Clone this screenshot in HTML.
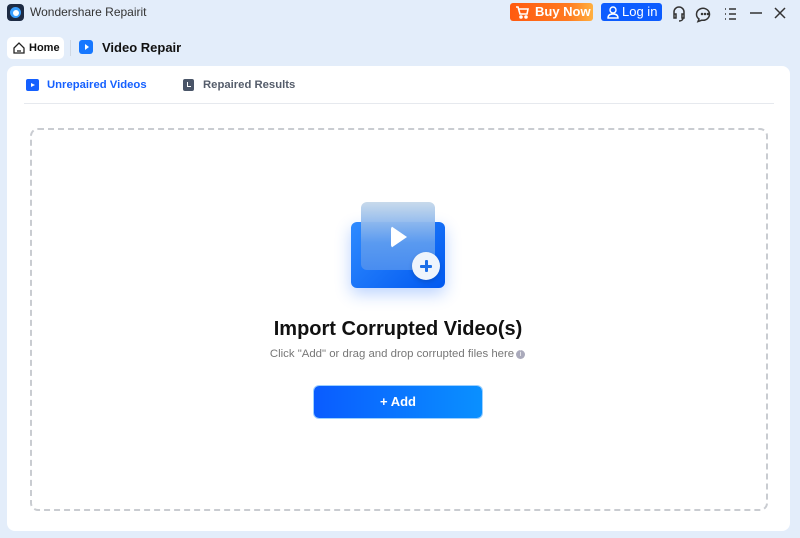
<!DOCTYPE html>
<html><head><meta charset="utf-8"><style>
*{margin:0;padding:0;box-sizing:border-box}
body{width:800px;height:538px;background:#e3edfa;font-family:"Liberation Sans",sans-serif;position:relative;overflow:hidden}
.abs{position:absolute}
.card{left:7px;top:66px;width:783px;height:465px;background:#fff;border-radius:8px}
.dash{left:30px;top:128px;width:738px;height:383px;border:2px dashed #c9ccd1;border-radius:8px}
</style></head><body>
<div class="abs" style="left:7px;top:4px;width:17px;height:17px;background:#1d2b44;border-radius:4px"></div>
<div class="abs" style="left:10px;top:7px;width:11px;height:11px;border-radius:50%;background:#3aa0ff"></div>
<div class="abs" style="left:13px;top:10px;width:6px;height:6px;border-radius:50%;background:#fff"></div>
<div class="abs" style="left:30px;top:5px;font-size:12px;color:#333">Wondershare Repairit</div>

<div class="abs" style="left:510px;top:3px;width:83px;height:18px;border-radius:3px;background:linear-gradient(90deg,#ff5a10,#ff7a20 70%,#ffb040);color:#fff;font-weight:bold;font-size:13px;line-height:18px;padding-left:25px">Buy Now</div>
<svg class="abs" style="left:515px;top:5px" width="15" height="14" fill="none" stroke="#fff" stroke-width="1.6"><path d="M1 2h2l2 7h7l1-5H4"/><circle cx="6" cy="12" r="1" fill="#fff"/><circle cx="11" cy="12" r="1" fill="#fff"/></svg>
<div class="abs" style="left:601px;top:3px;width:61px;height:18px;border-radius:3px;background:#0c5cff;color:#fff;font-size:13px;line-height:18px;padding-left:21px">Log in</div>
<svg class="abs" style="left:607px;top:5px" width="12" height="14"><circle cx="6" cy="5" r="3" fill="none" stroke="#fff" stroke-width="1.4"/><path d="M1 13c0-3 2-4 5-4s5 1 5 4z" fill="none" stroke="#fff" stroke-width="1.4"/></svg>
<svg class="abs" style="left:670px;top:3px" width="130" height="20" fill="none" stroke="#333" stroke-width="1.5"><path d="M4 12V9a5 5 0 0 1 10 0v3M4 11h2v4H4zM12 11h2v4h-2zM13 15c0 2-2 3-4 3"/><path d="M29 16a6.5 6 0 1 1 3 1.2l-4 1.3z"/><circle cx="32" cy="11" r=".5" fill="#333"/><circle cx="35" cy="11" r=".5" fill="#333"/><circle cx="38" cy="11" r=".5" fill="#333"/><path d="M55 6h1M59 6h7M55 11h1M59 11h7M55 16h1M59 16h7M80 10h12M105 5l10 10M115 5l-10 10"/></svg>

<div class="abs" style="left:7px;top:37px;width:57px;height:22px;background:#fff;border-radius:5px;font-size:11px;font-weight:bold;line-height:22px;padding-left:22px;color:#111">Home</div>
<svg class="abs" style="left:13px;top:42px" width="12" height="12" fill="none" stroke="#222" stroke-width="1.3"><path d="M1 6L6 1l5 5v5H1z"/><path d="M4 9h4"/></svg>
<div class="abs" style="left:70px;top:40px;width:1px;height:16px;background:#cfd8e4"></div>
<div class="abs" style="left:79px;top:40px;width:14px;height:14px;background:#1677ff;border-radius:3px"></div>
<div class="abs" style="left:85px;top:44px;border-left:4px solid #fff;border-top:3px solid transparent;border-bottom:3px solid transparent"></div>
<div class="abs" style="left:102px;top:40px;font-size:13px;font-weight:bold;color:#111">Video Repair</div>

<div class="abs card"></div>
<div class="abs" style="left:26px;top:79px;width:13px;height:12px;background:#1560ff;border-radius:2px"></div>
<div class="abs" style="left:31px;top:83px;border-left:4px solid #fff;border-top:2.5px solid transparent;border-bottom:2.5px solid transparent"></div>
<div class="abs" style="left:47px;top:79px;font-size:11.3px;font-weight:bold;color:#1560ff">Unrepaired Videos</div>
<div class="abs" style="left:183px;top:79px;width:11px;height:12px;background:#4a5568;border-radius:2px"></div>
<div class="abs" style="left:187px;top:82px;width:4px;height:5px;border-left:1.5px solid #fff;border-bottom:1.5px solid #fff"></div>
<div class="abs" style="left:203px;top:79px;font-size:11.3px;font-weight:bold;color:#555d6b">Repaired Results</div>
<div class="abs" style="left:24px;top:103px;width:750px;height:1px;background:#e6e9ee"></div>

<div class="abs dash"></div>
<div class="abs" style="left:351px;top:222px;width:94px;height:66px;border-radius:6px;background:linear-gradient(135deg,#2f8bff,#0058f0);box-shadow:0 6px 16px rgba(30,110,255,.3)"></div>
<div class="abs" style="left:361px;top:202px;width:74px;height:68px;border-radius:6px;background:linear-gradient(180deg,#c5d8ea,#5d9cf0 60%,#4b8ef0);opacity:.95"></div>
<div class="abs" style="left:391px;top:226px;border-left:16px solid #fff;border-top:11px solid transparent;border-bottom:11px solid transparent;border-radius:3px"></div>
<div class="abs" style="left:412px;top:252px;width:28px;height:28px;border-radius:50%;background:#eef4fc;box-shadow:0 2px 5px rgba(0,0,0,.15)"></div>
<div class="abs" style="left:420px;top:265px;width:12px;height:3px;background:#1c6fe8;border-radius:1px"></div>
<div class="abs" style="left:424.5px;top:260px;width:3px;height:12px;background:#1c6fe8;border-radius:1px"></div>

<div class="abs" style="left:0;width:796px;top:318px;text-align:center;font-size:20px;font-weight:bold;color:#111">Import Corrupted Video(s)</div>
<div class="abs" style="left:0;width:784px;top:348px;text-align:center;font-size:11.4px;color:#777">Click "Add" or drag and drop corrupted files here</div>
<div class="abs" style="left:516px;top:350px;width:9px;height:9px;border-radius:50%;background:#aab;color:#fff;font-size:7px;text-align:center;line-height:9px">i</div>
<div class="abs" style="left:314px;top:386px;width:168px;height:32px;border-radius:5px;background:linear-gradient(90deg,#0a5cff,#0a90ff);color:#fff;font-weight:bold;font-size:13px;text-align:center;line-height:32px;box-shadow:0 0 0 1px #9cd0ff">+ Add</div>
</body></html>
